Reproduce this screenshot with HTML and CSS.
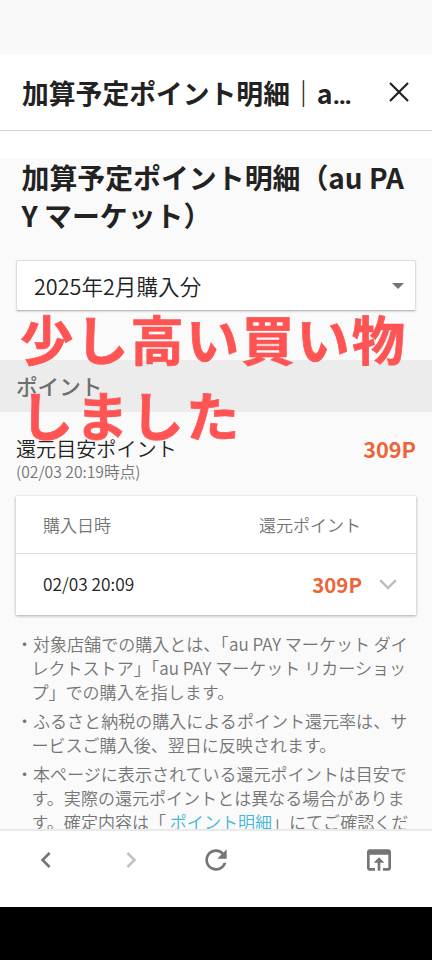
FILE: index.html
```html
<!DOCTYPE html>
<html lang="ja">
<head>
<meta charset="utf-8">
<meta name="viewport" content="width=device-width">
<title>加算予定ポイント明細</title>
<link rel="stylesheet" href="styles.css">
</head>
<body>
<div class="screen">
  <div class="status-bar"></div>
  <header class="title-bar">
    <div class="title">加算予定ポイント明細｜a<span class="dots">…</span></div>
    <svg class="close" viewBox="0 0 20 20"><path d="M1 1 19 19M19 1 1 19"/></svg>
  </header>
  <main class="content">
    <h1>加算予定ポイント明細（au PA<br>Y マーケット）</h1>
    <div class="select"><span>2025年2月購入分</span><i class="caret"></i></div>
    <h2>ポイント</h2>
    <section class="summary">
      <div>
        <div class="summary-label">還元目安ポイント</div>
        <div class="summary-time">(02/03 20:19時点)</div>
      </div>
      <div class="summary-value">309P</div>
    </section>
    <section class="table">
      <div class="row head"><span>購入日時</span><span class="points">還元ポイント</span></div>
      <div class="row"><span>02/03 20:09</span><b class="points">309P</b>
        <svg class="chevron" viewBox="0 0 18 11"><path d="M1.2 1.2 9 9 16.8 1.2"/></svg>
      </div>
    </section>
    <ul class="notes">
      <li>・対象店舗での購入とは、「au PAY マーケット ダイ<br>レクトストア」「au PAY マーケット リカーショッ<br>プ」での購入を指します。</li>
      <li>・ふるさと納税の購入によるポイント還元率は、サ<br>ービスご購入後、翌日に反映されます。</li>
      <li>・本ページに表示されている還元ポイントは目安で<br>す。実際の還元ポイントとは異なる場合がありま<br>す。確定内容は「 <a>ポイント明細</a>」にてご確認くだ</li>
    </ul>
  </main>
  <nav class="toolbar">
    <svg class="back" viewBox="0 0 24 24"><path d="M15.41 7.41 14 6l-6 6 6 6 1.41-1.41L10.83 12z"/></svg>
    <svg class="forward" viewBox="0 0 24 24"><path d="M10 6 8.59 7.41 13.17 12l-4.58 4.59L10 18l6-6z"/></svg>
    <svg class="reload" viewBox="0 0 24 24"><path d="M17.65 6.35C16.2 4.9 14.21 4 12 4c-4.42 0-7.99 3.58-7.99 8s3.57 8 7.99 8c3.73 0 6.84-2.55 7.73-6h-2.08c-.82 2.33-3.04 4-5.65 4-3.31 0-6-2.69-6-6s2.69-6 6-6c1.66 0 3.14.69 4.22 1.78L13 11h7V4l-2.35 2.35z"/></svg>
    <svg class="open" viewBox="0 0 24 24"><path d="M19 4H5c-1.11 0-2 .9-2 2v12c0 1.1.89 2 2 2h4v-2H5V8h14v10h-4v2h4c1.1 0 2-.9 2-2V6c0-1.1-.89-2-2-2zm-7 6-4 4h3v6h2v-6h3l-4-4z"/></svg>
  </nav>
  <div class="system-bar"></div>
  <div class="caption">少し高い買い物<br>しました</div>
</div>
</body>
</html>
```
FILE: styles.css
```css
* { box-sizing: border-box; }
body { margin: 0; font-family: "Noto Sans CJK JP", sans-serif; font-weight: 350; color: #222; }
.screen { position: relative; display: flex; flex-direction: column; width: 432px; height: 960px; overflow: hidden; background: #fafafa; white-space: nowrap; }
.status-bar { height: 54px; background: #f9f9f9; flex: none; }
.title-bar { height: 77px; flex: none; display: flex; align-items: center; justify-content: space-between; padding: 0 23px 0 22px; background: #fff; border-bottom: 1px solid #d2d2d2; }
.title { font-size: 26.8px; font-weight: 700; line-height: 38px; padding-top: 3px; }
.dots { font-family: Roboto, sans-serif; font-size: 26px; }
.close { width: 20px; height: 20px; fill: none; stroke: #222; stroke-width: 2.2; }
.content { flex: 1; min-height: 0; overflow: hidden; border-top: 27px solid #fff; }
h1 { margin: 0 0 0 21.5px; font-size: 27.9px; font-weight: 700; line-height: 38px; }
.select { margin: 26px 16px 0; height: 51px; display: flex; align-items: center; justify-content: space-between; padding: 0 11px 1px 17px; border: 1px solid #dedede; border-bottom-color: #bbb; border-radius: 2px; background: #fff; box-shadow: 0 1px 2px #0002; font-size: 21.6px; }
.caret { margin-top: 1px; border: 6px solid transparent; border-top: 6px solid #757575; border-bottom: 0; }
h2 { margin: 49px 0 0; height: 52px; padding-left: 16px; background: #ececec; color: #6f6f6f; font-size: 21.6px; font-weight: 500; line-height: 52px; }
.summary { display: flex; justify-content: space-between; padding: 22px 16px 0; height: 84px; }
.summary-label { font-size: 20.1px; line-height: 29px; }
.summary-time { font-size: 15.7px; line-height: 17px; color: #757575; }
.summary-value { font-size: 21.7px; line-height: 30px; font-weight: 700; color: #eb6538; }
.table { margin: 0 16px; height: 119px; background: #fff; box-shadow: 0 1px 3px #0005; }
.row { position: relative; height: 61px; display: flex; align-items: center; justify-content: space-between; padding: 0 54px 2px 27px; font-size: 17.3px; }
.head { height: 58px; padding-right: 55px; padding-bottom: 0; border-bottom: 1px solid #dcdcdc; color: #757575; font-size: 17px; }
.row b { padding-top: 1px; font-size: 20.4px; font-weight: 700; color: #eb6538; }
.chevron { position: absolute; right: 19px; top: 25px; width: 18px; height: 11px; fill: none; stroke: #bdbdbd; stroke-width: 2.4; }
.notes { list-style: none; margin: 17px 0 0; padding: 0 0 0 31.5px; color: #757575; font-size: 17.05px; line-height: 24px; }
.notes li { text-indent: -15.5px; margin-bottom: 5px; }
.notes a { color: #43b7d8; }
.toolbar { height: 78px; flex: none; display: grid; grid-template-columns: 85px 85px 1fr auto; border-top: 2px solid #eaeaea; background: #fff; padding: 13px 37px 0 30px; }
.toolbar svg { width: 32px; height: 32px; fill: #757575; }
.toolbar .forward { fill: #c4c4c4; }
.system-bar { height: 53px; flex: none; background: #000; }
.caption { position: absolute; left: 20px; top: 300px; font-size: 53.3px; letter-spacing: 2px; font-weight: 700; -webkit-text-stroke: .7px #ff5454; line-height: 75.5px; color: #ff5454; }
```
